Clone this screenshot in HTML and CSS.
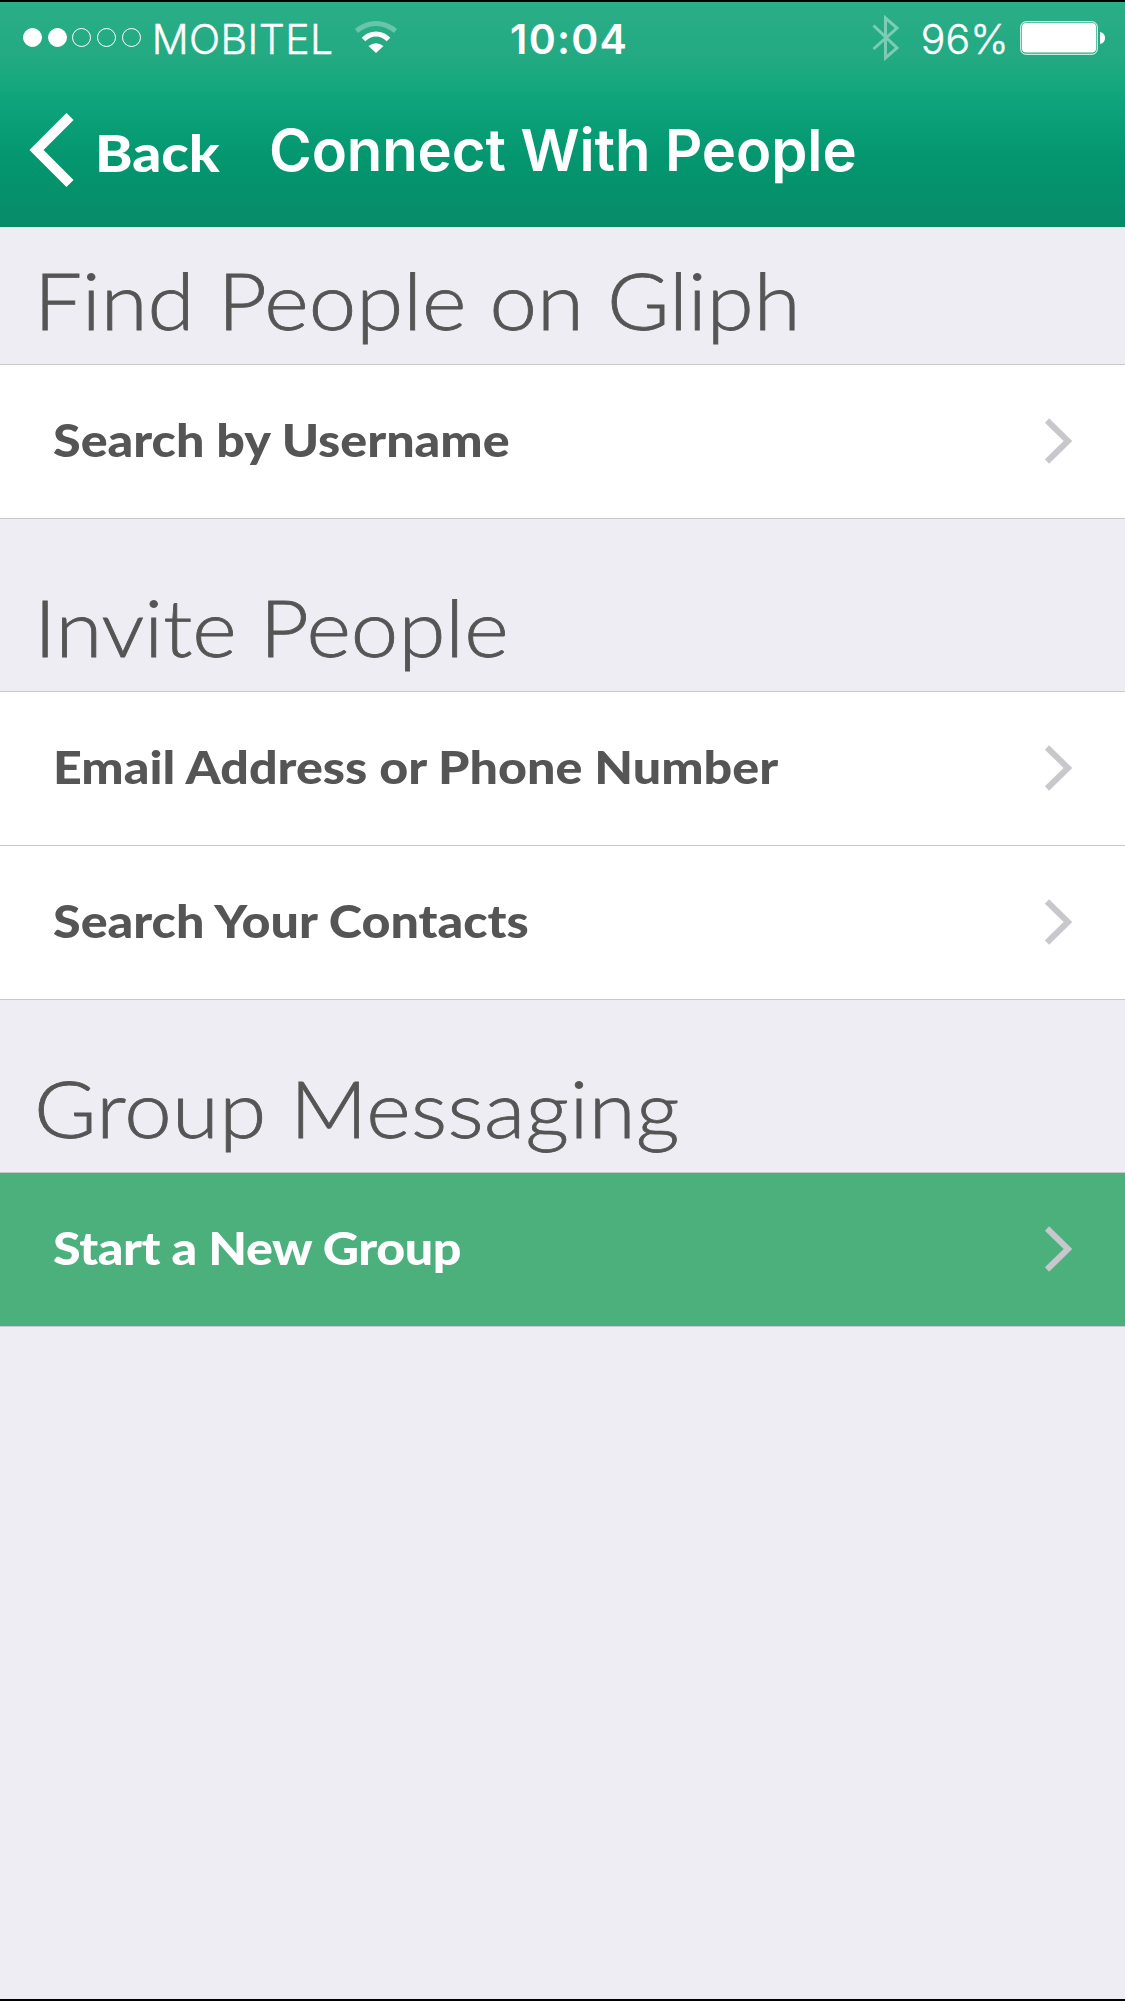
FILE: index.html
```html
<!doctype html>
<html lang="en">

<head>
  <meta charset="UTF-8" />
  <title>Connect With People</title>
  <link rel="stylesheet" href="styles.css">
</head>

<body>
  <header>
    <div class="status-bar">
      <div class="carrier">
        <div class="signal">
          <span class="dot full"></span>
          <span class="dot full"></span>
          <span class="dot"></span>
          <span class="dot"></span>
          <span class="dot"></span>
        </div>
        <span class="carrier-name">MOBITEL</span>
        <svg class="wifi" width="44" height="34" viewBox="0 0 44 34">
          <path d="M2.500 11Q11.500 3.500 22 3.500T41.500 11" fill="none" stroke="#fff" stroke-width="5" opacity=".3" />
          <path d="M9.500 19.500Q15 14 22 14T34.500 19.500" fill="none" stroke="#fff" stroke-width="5" />
          <path d="M22 33L14.500 26Q22 20.500 29.500 26Z" fill="#fff" />
        </svg>
      </div>
      <span class="time">10:04</span>
      <div class="power">
        <svg class="bluetooth" width="28" height="50" viewBox="0 0 28 50">
          <path d="M1.500 12.500L25 35L13.500 45V5L25 15L1.500 36" fill="none" stroke="#fff" stroke-width="3" />
        </svg>
        <span class="percent">96%</span>
        <svg class="battery" width="86" height="34" viewBox="0 0 86 34">
          <rect x=".75" y=".75" width="76.500" height="32.500" rx="5" fill="none" stroke="#fff" stroke-width="1" />
          <rect x="2" y="2" width="74" height="29.500" rx="4" fill="#fff" />
          <path d="M80 11Q85 12 85 17Q85 22 80 23Z" fill="#fff" />
        </svg>
      </div>
    </div>
    <nav>
      <a class="back">
        <svg width="46" height="74" viewBox="0 0 46 74">
          <path d="M41 3.500L7.500 37L41 70.500" fill="none" stroke="#fff" stroke-width="10" />
        </svg>
        <span class="wide">Back</span>
      </a>
      <h1>Connect With People</h1>
    </nav>
  </header>

  <main>
    <h2 class="first"><span class="wide">Find People on Gliph</span></h2>
    <ul>
      <li>
        <span class="wide">Search by Username</span>
        <svg class="chevron" width="28" height="46" viewBox="0 0 28 46"><path d="M3 2.500L24 23L3 43.500" /></svg>
      </li>
    </ul>

    <h2><span class="wide">Invite People</span></h2>
    <ul>
      <li>
        <span class="wide">Email Address or Phone Number</span>
        <svg class="chevron" width="28" height="46" viewBox="0 0 28 46"><path d="M3 2.500L24 23L3 43.500" /></svg>
      </li>
      <li>
        <span class="wide">Search Your Contacts</span>
        <svg class="chevron" width="28" height="46" viewBox="0 0 28 46"><path d="M3 2.500L24 23L3 43.500" /></svg>
      </li>
    </ul>

    <h2 class="group-title"><span class="wide">Group Messaging</span></h2>
    <ul class="new-group">
      <li>
        <span class="wide">Start a New Group</span>
        <svg class="chevron" width="28" height="46" viewBox="0 0 28 46"><path d="M3 2.500L24 23L3 43.500" /></svg>
      </li>
    </ul>
  </main>
</body>

</html>
```
FILE: styles.css
```css
* {
  box-sizing: border-box;
}

body {
  margin: 0;
  height: 2001px;
  border-top: 2px solid #000;
  border-bottom: 2px solid #000;
  background: #eeedf3;
  color: #555;
  font-family: Lato, "Open Sans", sans-serif;
}

header {
  height: 225px;
  color: #fff;
  background: linear-gradient(#2aae87 0, #23aa82 55px, #18a97f 76px, #0da27b 105px, #04976f 155px, #078b67 225px);
}

/* slightly extended lettering */
.wide {
  transform: scaleX(1.092);
  transform-origin: left;
}

.status-bar {
  display: grid;
  grid-template-columns: 1fr auto 1fr;
  align-items: center;
  height: 73px;
  padding: 0 19px 0 23px;
  font: 41px/50px Inter, sans-serif;
}

.carrier,
.signal,
.power {
  display: flex;
  align-items: center;
}

.signal {
  gap: 5.700px;
  margin-top: -3px;
}

.dot {
  width: 19px;
  height: 19px;
  border: 1px solid #fff;
  border-radius: 50%;
}

.full {
  background: #fff;
}

.carrier-name {
  margin-left: 11px;
  font-weight: 300;
  letter-spacing: 0.4px;
  -webkit-text-stroke: 0.4px #fff;
}

.wifi {
  margin: -4px 0 0 20px;
}

.time {
  padding-left: 9px;
  font-weight: 600;
  letter-spacing: 1.2px;
}

.power {
  justify-content: flex-end;
}

.bluetooth {
  opacity: 0.4;
  margin-top: -2px;
}

.percent {
  margin: 0 11px 0 21px;
  font-weight: 300;
  letter-spacing: 0.2px;
  -webkit-text-stroke: 0.4px #fff;
}

.battery {
  margin-top: -1px;
}

nav {
  display: flex;
  align-items: center;
  height: 150px;
  padding-left: 29px;
}

.back {
  display: flex;
  align-items: center;
  width: 240px;
  font-size: 52px;
  font-weight: 900;
}

.back span {
  margin-left: 20px;
  padding-top: 4px;
}

h1 {
  margin: 0;
  padding-bottom: 1px;
  font: 600 58px/70px Inter, sans-serif;
  letter-spacing: -0.1px;
}

h2 {
  display: flex;
  align-items: flex-end;
  height: 172px;
  margin: 0;
  padding: 0 34px 17px;
  font-size: 78px;
  font-weight: 300;
  line-height: 94px;
  -webkit-text-stroke: 0.8px #555;
}

h2.first {
  height: 137px;
}

h2.group-title {
  letter-spacing: 0.300px;
}

ul {
  margin: 0;
  padding: 0;
  list-style: none;
  background: #fff;
  border-top: 1px solid #c8c7cc;
}

li {
  display: flex;
  align-items: center;
  justify-content: space-between;
  height: 154px;
  padding: 0 53px 5px;
  border-bottom: 1px solid #c8c7cc;
  font-size: 46px;
  font-weight: 900;
}

.chevron {
  margin-top: 3px;
  fill: none;
  stroke: #c7c7cc;
  stroke-width: 6;
}

.new-group {
  background: #4bb07c;
  color: #fff;
  letter-spacing: -0.400px;
}
```
